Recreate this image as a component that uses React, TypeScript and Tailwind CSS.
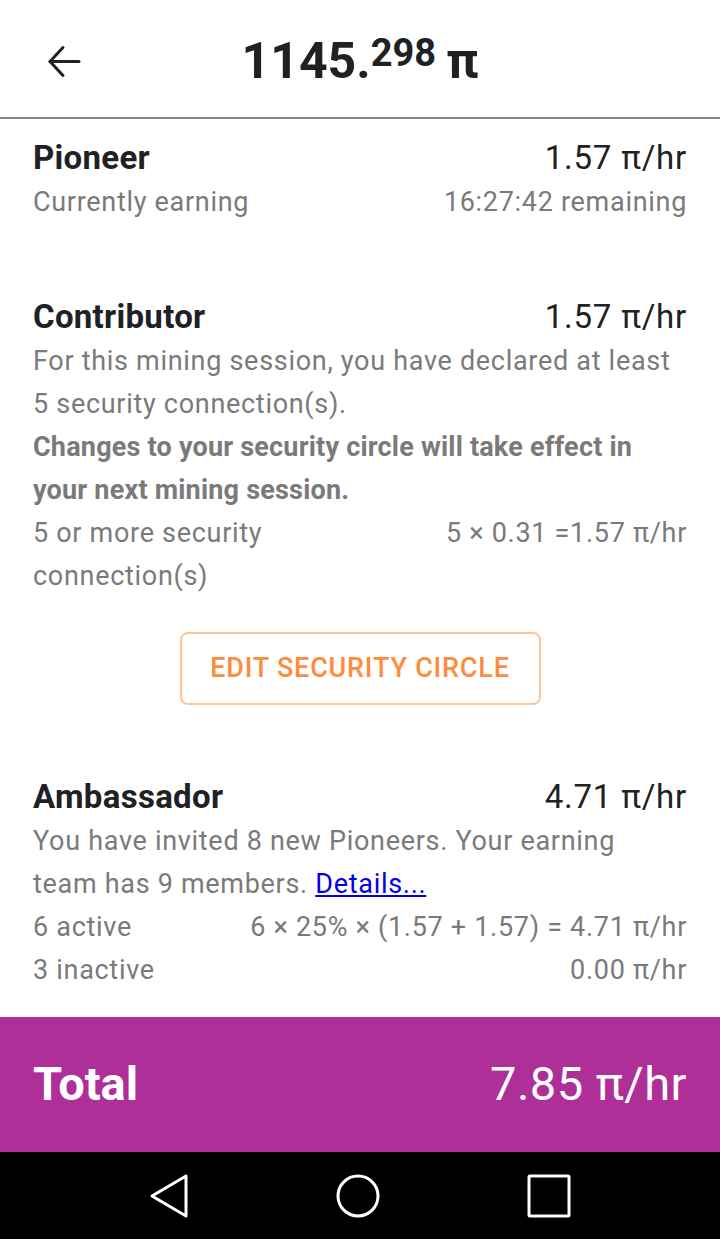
import React from 'react';

const rate = 'π/hr';

function Row({ left, right, className = '' }: { left: React.ReactNode; right: React.ReactNode; className?: string }) {
  return (
    <div className={`flex justify-between items-start gap-4 ${className}`}>
      <div>{left}</div>
      <div className="text-right whitespace-nowrap">{right}</div>
    </div>
  );
}

function Heading({ title, value }: { title: string; value: string }) {
  return (
    <Row
      className="text-[#202124] leading-[47px] text-[33px]"
      left={<span className="font-bold tracking-[0.3px]">{title}</span>}
      right={<span className="tracking-[0.8px]">{value}</span>}
    />
  );
}

export default function App() {
  return (
    <div className="w-[720px] h-[1239px] bg-white flex flex-col font-['Roboto',sans-serif] overflow-hidden">
      {/* Header */}
      <header className="h-[119px] shrink-0 border-b-2 border-[#858585] flex items-center relative">
        <button className="absolute left-[47px] top-[45px] text-[#202124]">
          <svg width="34" height="33" viewBox="0 0 34 33" fill="none" stroke="currentColor" strokeWidth="3" strokeLinecap="round" strokeLinejoin="round">
            <path d="M3 16.5H32" />
            <path d="M16 2.5 3 16.5l13 14" />
          </svg>
        </button>
        <div className="w-full flex justify-center items-baseline pt-1 text-[#202124] font-bold">
          <span className="text-[50px] leading-none">1145.</span>
          <span className="text-[38px] leading-none relative -top-[12px]">298</span>
          <span className="text-[50px] leading-none ml-[10px]">π</span>
        </div>
      </header>

      {/* Body */}
      <main className="flex-1 px-[33px] text-[27px] tracking-[0.7px] text-[#7a7a7a]">
        {/* Pioneer */}
        <section className="pt-[15px]">
          <Heading title="Pioneer" value={`1.57 ${rate}`} />
          <Row className="leading-[43px]" left="Currently earning" right="16:27:42 remaining" />
        </section>

        {/* Contributor */}
        <section className="pt-[69px]">
          <Heading title="Contributor" value={`1.57 ${rate}`} />
          <p className="leading-[43px]">
            For this mining session, you have declared at least
            <br />5 security connection(s).
          </p>
          <p className="leading-[43px] font-bold tracking-[0.2px]">
            Changes to your security circle will take effect in
            <br />your next mining session.
          </p>
          <Row
            className="leading-[43px]"
            left={
              <span>
                5 or more security
                <br />
                connection(s)
              </span>
            }
            right={<span>5 × 0.31 =1.57 {rate}</span>}
          />
          <div className="flex justify-center pt-[34px]">
            <button className="w-[361px] h-[73px] border-2 border-[#ffc595] rounded-[8px] text-[#ff8b3c] text-[27px] font-medium tracking-[0.8px]">
              EDIT SECURITY CIRCLE
            </button>
          </div>
        </section>

        {/* Ambassador */}
        <section className="pt-[68px]">
          <Heading title="Ambassador" value={`4.71 ${rate}`} />
          <p className="leading-[43px]">
            You have invited 8 new Pioneers. Your earning
            <br />
            team has 9 members. <a href="#" className="text-[#0000ee] underline">Details...</a>
          </p>
          <Row className="leading-[43px]" left="6 active" right={<span>6 × 25% × (1.57 + 1.57) = 4.71 {rate}</span>} />
          <Row className="leading-[43px]" left="3 inactive" right={<span>0.00 {rate}</span>} />
        </section>
      </main>

      {/* Total */}
      <div className="h-[135px] shrink-0 bg-[#ad2f97] px-[33px] flex items-center justify-between text-white text-[47px]">
        <span className="font-bold">Total</span>
        <span className="tracking-[0.5px]">7.85 {rate}</span>
      </div>

      {/* Android nav bar */}
      <nav className="h-[87px] shrink-0 bg-black flex items-center justify-center gap-[147px]">
        <svg width="40" height="46" viewBox="0 0 40 46" fill="none" stroke="white" strokeWidth="3" strokeLinejoin="round">
          <path d="M37 3 L3 23 L37 43 Z" />
        </svg>
        <svg width="44" height="44" viewBox="0 0 44 44" fill="none" stroke="white" strokeWidth="3">
          <circle cx="22" cy="22" r="20" />
        </svg>
        <svg width="44" height="44" viewBox="0 0 44 44" fill="none" stroke="white" strokeWidth="3">
          <rect x="2" y="2" width="40" height="40" rx="1" />
        </svg>
      </nav>
    </div>
  );
}
